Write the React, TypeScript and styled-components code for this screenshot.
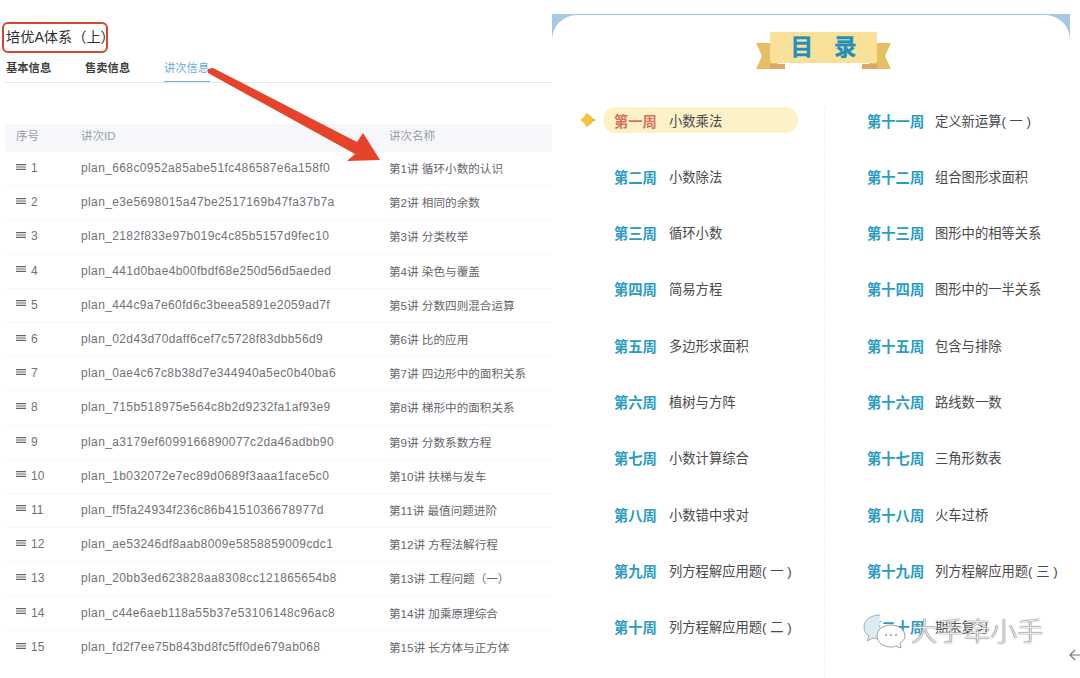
import { createGlobalStyle } from "styled-components";
import styled from "styled-components";

const GlobalStyle = createGlobalStyle`
  html, body {
    margin: 0;
    padding: 0;
    background: #fff;
  }
  body {
    font-family: "Liberation Sans", "Noto Sans CJK SC", sans-serif;
  }
`;

const Page = styled.div`
  position: relative;
  display: flex;
  width: 1080px;
  height: 678px;
  overflow: hidden;
  background: #fff;
`;

const LeftPanel = styled.section`
  width: 552px;
  flex: none;
  padding: 22px 0 0 5px;
  box-sizing: border-box;
`;

const TitleBox = styled.div`
  width: 106px;
  height: 31px;
  margin-left: -3px;
  padding: 0 0 3px 2px;
  box-sizing: border-box;
  border: 2px solid #d8442e;
  border-radius: 6px;
  display: flex;
  align-items: center;
  font-size: 14.2px;
  color: #2e2e2e;
  white-space: nowrap;
`;

const Tabs = styled.div`
  display: flex;
  gap: 33px;
  height: 29px;
  padding-left: 1px;
  border-bottom: 1px solid #e4e6e9;
`;

const Tab = styled.div<{ $active?: boolean }>`
  width: 46px;
  height: 29px;
  box-sizing: border-box;
  padding-top: 6px;
  font-size: 11.3px;
  font-weight: ${(p) => (p.$active ? 400 : 700)};
  color: ${(p) => (p.$active ? "#6aa8e0" : "#3f3f3f")};
  border-bottom: ${(p) => (p.$active ? "1px solid #7db3e6" : "none")};
  white-space: nowrap;
`;

const Table = styled.div`
  margin-top: 41px;
`;

const HeaderRow = styled.div`
  display: grid;
  grid-template-columns: 76px 308px 1fr;
  align-items: center;
  height: 28px;
  box-sizing: border-box;
  padding-bottom: 6px;
  background: #f6f7fa;
  font-size: 11.5px;
  color: #9a9ea5;
`;

const Row = styled.div`
  display: grid;
  grid-template-columns: 76px 308px 1fr;
  align-items: center;
  height: 34.2px;
  box-sizing: border-box;
  padding-bottom: 1px;
  border-bottom: 1px solid #f6f7f8;
  color: #707275;
  &:last-child {
    border-bottom: none;
  }
`;

const IndexCell = styled.div`
  display: flex;
  align-items: center;
  gap: 5px;
  padding-left: 11px;
  font-size: 12px;
`;

const DragIconSvg = styled.svg`
  width: 10px;
  height: 6px;
  margin-top: -3px;
`;

const HeaderIndex = styled.div`
  padding-left: 11px;
`;

const IdCell = styled.div`
  font-size: 12px;
  white-space: nowrap;
  letter-spacing: 0.38px;
`;

const NameCell = styled.div`
  font-size: 11.6px;
  white-space: nowrap;
  color: #63666a;
`;

const ArrowMark = styled.svg`
  position: absolute;
  left: 200px;
  top: 60px;
  width: 190px;
  height: 110px;
`;

const RightPanel = styled.section`
  width: 518px;
  height: 664px;
  margin-top: 14px;
  flex: none;
  box-sizing: border-box;
  background: #a6c9e3;
`;

const Sheet = styled.div`
  height: 100%;
  margin-top: 1px;
  background: #fff;
  border-radius: 25px 25px 0 0;
  display: flex;
  flex-direction: column;
  align-items: center;
`;

const Ribbon = styled.div`
  position: relative;
  margin: 17px 0 0 25px;
  width: 135px;
  height: 38px;
  flex: none;
`;

const RibbonSvg = styled.svg`
  position: absolute;
  inset: 0;
  width: 100%;
  height: 100%;
`;

const RibbonTitle = styled.div`
  position: absolute;
  left: 0;
  right: 0;
  top: 1px;
  text-align: center;
  font-size: 22.5px;
  line-height: 30px;
  font-weight: 700;
  letter-spacing: 21px;
  padding-left: 21px;
  color: #1f8fbd;
  -webkit-text-stroke: 0.4px #1f8fbd;
`;

const Contents = styled.div`
  margin-top: 37px;
  width: 100%;
  display: grid;
  grid-template-columns: 272px 1fr;
  flex: 1;
`;

const Column = styled.div<{ $right?: boolean }>`
  padding-left: ${(p) => (p.$right ? "42px" : "62px")};
  border-left: ${(p) => (p.$right ? "1px dashed #f1f3f5" : "none")};
`;

const Week = styled.div<{ $current?: boolean }>`
  position: relative;
  display: flex;
  align-items: center;
  box-sizing: border-box;
  width: 195px;
  height: 26px;
  margin-bottom: 30.3px;
  margin-left: ${(p) => (p.$current ? "-11px" : "0")};
  padding-left: ${(p) => (p.$current ? "11px" : "0")};
  background: ${(p) => (p.$current ? "#fdf1c8" : "transparent")};
  border-radius: 13px;
  white-space: nowrap;
`;

const WeekLabel = styled.span<{ $current?: boolean; $wide?: boolean }>`
  width: ${(p) => (p.$wide ? "68px" : "55px")};
  flex: none;
  font-size: 14.3px;
  font-weight: 700;
  color: ${(p) => (p.$current ? "#d9705c" : "#2a9cc4")};
`;

const WeekName = styled.span`
  font-size: 13.3px;
  color: #4a4a4a;
`;

const Pointer = styled.svg`
  position: absolute;
  left: -23px;
  top: 5px;
  width: 17px;
  height: 16px;
`;

const Watermark = styled.div`
  position: absolute;
  left: 860px;
  top: 612px;
  display: flex;
  align-items: center;
  gap: 5px;
`;

const WatermarkText = styled.span`
  font-size: 26.5px;
  font-weight: 300;
  line-height: 36px;
  margin-top: 2px;
  color: rgba(255, 255, 255, 0.9);
  text-shadow: 0 0 1px #555, 0 0 1px #555;
  white-space: nowrap;
`;

const BackArrow = styled.svg`
  position: absolute;
  left: 1068px;
  top: 648px;
  width: 12px;
  height: 14px;
`;

const lessons = [
  ["plan_668c0952a85abe51fc486587e6a158f0", "第1讲 循环小数的认识"],
  ["plan_e3e5698015a47be2517169b47fa37b7a", "第2讲 相同的余数"],
  ["plan_2182f833e97b019c4c85b5157d9fec10", "第3讲 分类枚举"],
  ["plan_441d0bae4b00fbdf68e250d56d5aeded", "第4讲 染色与覆盖"],
  ["plan_444c9a7e60fd6c3beea5891e2059ad7f", "第5讲 分数四则混合运算"],
  ["plan_02d43d70daff6cef7c5728f83dbb56d9", "第6讲 比的应用"],
  ["plan_0ae4c67c8b38d7e344940a5ec0b40ba6", "第7讲 四边形中的面积关系"],
  ["plan_715b518975e564c8b2d9232fa1af93e9", "第8讲 梯形中的面积关系"],
  ["plan_a3179ef6099166890077c2da46adbb90", "第9讲 分数系数方程"],
  ["plan_1b032072e7ec89d0689f3aaa1face5c0", "第10讲 扶梯与发车"],
  ["plan_ff5fa24934f236c86b4151036678977d", "第11讲 最值问题进阶"],
  ["plan_ae53246df8aab8009e5858859009cdc1", "第12讲 方程法解行程"],
  ["plan_20bb3ed623828aa8308cc121865654b8", "第13讲 工程问题（一）"],
  ["plan_c44e6aeb118a55b37e53106148c96ac8", "第14讲 加乘原理综合"],
  ["plan_fd2f7ee75b843bd8fc5ff0de679ab068", "第15讲 长方体与正方体"],
];

const leftWeeks = [
  ["第一周", "小数乘法"],
  ["第二周", "小数除法"],
  ["第三周", "循环小数"],
  ["第四周", "简易方程"],
  ["第五周", "多边形求面积"],
  ["第六周", "植树与方阵"],
  ["第七周", "小数计算综合"],
  ["第八周", "小数错中求对"],
  ["第九周", "列方程解应用题( 一 )"],
  ["第十周", "列方程解应用题( 二 )"],
];

const rightWeeks = [
  ["第十一周", "定义新运算( 一 )"],
  ["第十二周", "组合图形求面积"],
  ["第十三周", "图形中的相等关系"],
  ["第十四周", "图形中的一半关系"],
  ["第十五周", "包含与排除"],
  ["第十六周", "路线数一数"],
  ["第十七周", "三角形数表"],
  ["第十八周", "火车过桥"],
  ["第十九周", "列方程解应用题( 三 )"],
  ["第二十周", "期末复习"],
];

function DragIcon() {
  return (
    <DragIconSvg viewBox="0 0 10 6">
      <path d="M0 .6h10M0 3h10M0 5.4h10" stroke="#666" strokeWidth="1.1" />
    </DragIconSvg>
  );
}

function App() {
  return (
    <Page>
      <GlobalStyle />
      <LeftPanel>
        <TitleBox>培优A体系（上）</TitleBox>
        <Tabs>
          <Tab>基本信息</Tab>
          <Tab>售卖信息</Tab>
          <Tab $active>讲次信息</Tab>
        </Tabs>
        <Table>
          <HeaderRow>
            <HeaderIndex>序号</HeaderIndex>
            <div>讲次ID</div>
            <div>讲次名称</div>
          </HeaderRow>
          {lessons.map(([id, name], i) => (
            <Row key={id}>
              <IndexCell>
                <DragIcon />
                {i + 1}
              </IndexCell>
              <IdCell>{id}</IdCell>
              <NameCell>{name}</NameCell>
            </Row>
          ))}
        </Table>
      </LeftPanel>

      <RightPanel>
        <Sheet>
          <Ribbon>
            <RibbonSvg viewBox="0 0 135 38">
              <path d="M0 11 H22 V37 H0 L6 24Z" fill="#e6bf62" />
              <path d="M135 11 H113 V37 H135 L129 24Z" fill="#e6bf62" />
              <path d="M14 32 H29 V37 H14Z" fill="#dca765" />
              <path d="M121 32 H106 V37 H121Z" fill="#dca765" />
              <rect x="14" y="0" width="107" height="31" rx="2" fill="#f9e19a" />
            </RibbonSvg>
            <RibbonTitle>目录</RibbonTitle>
          </Ribbon>
          <Contents>
            <Column>
              {leftWeeks.map(([week, name], i) => (
                <Week key={week} $current={i === 0}>
                  {i === 0 && (
                    <Pointer viewBox="0 0 17 16">
                      <path d="M0 8 L4 5 L6 1 L10 3 L13 6 L13 10 L10 13 L6 15 L4 11Z" fill="#f3c53c" />
                      <path d="M13 7 L16 8 L13 9Z" fill="#9a9a3c" />
                    </Pointer>
                  )}
                  <WeekLabel $current={i === 0}>{week}</WeekLabel>
                  <WeekName>{name}</WeekName>
                </Week>
              ))}
            </Column>
            <Column $right>
              {rightWeeks.map(([week, name]) => (
                <Week key={week}>
                  <WeekLabel $wide>{week}</WeekLabel>
                  <WeekName>{name}</WeekName>
                </Week>
              ))}
            </Column>
          </Contents>
        </Sheet>
      </RightPanel>

      <ArrowMark viewBox="0 0 190 110">
        <path d="M8 9 L13 8 L157 82 L163 73 L180 100 L147 101 L155 94 L8 13Z" fill="#e5432a" />
      </ArrowMark>

      <Watermark>
        <svg width="46" height="36" viewBox="0 0 46 36" fill="none">
          <path d="M20 2c-9 0-16 5-16 12 0 4 2 7 5 9l-2 5 6-3c2 .6 4 1 6 1" fill="#dcebf3" stroke="#999" strokeWidth="0.8" />
          <path d="M31 12c-8 0-14 5-14 11s6 11 14 11c2 0 3 0 5-1l5 2-1-5c3-2 5-4 5-7 0-6-6-11-14-11z" fill="rgba(255,255,255,0.96)" stroke="#888" strokeWidth="0.8" />
          <circle cx="26" cy="22" r="1" fill="#999" />
          <circle cx="31" cy="22" r="1" fill="#999" />
          <circle cx="36" cy="22" r="1" fill="#999" />
        </svg>
        <WatermarkText>大手牵小手</WatermarkText>
      </Watermark>

      <BackArrow viewBox="0 0 12 14">
        <path d="M12 7H2M7 2L2 7l5 5" fill="none" stroke="#777" strokeWidth="1.2" />
      </BackArrow>
    </Page>
  );
}

export default App;
